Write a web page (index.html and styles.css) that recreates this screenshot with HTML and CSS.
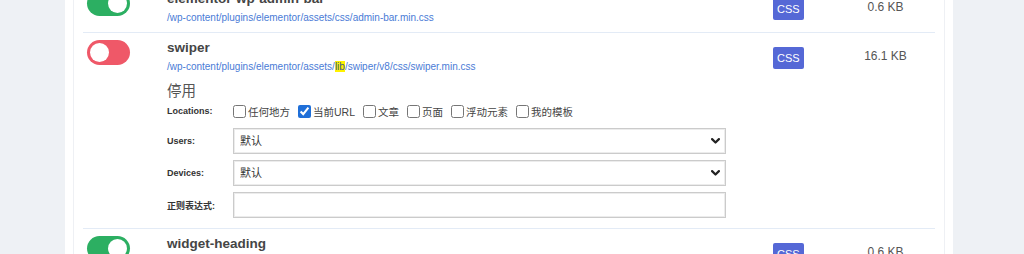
FILE: index.html
```html
<!DOCTYPE html>
<html lang="zh-CN">
<head>
<meta charset="utf-8">
<title>Assets</title>
<link rel="stylesheet" href="styles.css">
</head>
<body>
<div class="page">
  <div class="panel">
    <div class="box">
      <div class="row">
        <div class="c-toggle"><span class="toggle on"></span></div>
        <div class="c-info">
          <div class="name">elementor-wp-admin-bar</div>
          <div class="path">/wp-content/plugins/elementor/assets/css/admin-bar.min.css</div>
        </div>
        <div class="c-type"><span class="badge">CSS</span></div>
        <div class="c-size">0.6 KB</div>
      </div>
      <div class="row row-open">
        <div class="c-toggle"><span class="toggle off"></span></div>
        <div class="c-info">
          <div class="name">swiper</div>
          <div class="path">/wp-content/plugins/elementor/assets/<mark class="hl">lib</mark>/swiper/v8/css/swiper.min.css</div>
          <div class="details">
            <div class="state">停用</div>
            <div class="field-row loc-row">
              <span class="label">Locations:</span>
              <div class="checks">
                <label class="check"><input type="checkbox">任何地方</label>
                <label class="check"><input type="checkbox" checked>当前URL</label>
                <label class="check"><input type="checkbox">文章</label>
                <label class="check"><input type="checkbox">页面</label>
                <label class="check"><input type="checkbox">浮动元素</label>
                <label class="check"><input type="checkbox">我的模板</label>
              </div>
            </div>
            <div class="field-row">
              <span class="label">Users:</span>
              <select class="input select"><option>默认</option></select>
            </div>
            <div class="field-row">
              <span class="label">Devices:</span>
              <select class="input select"><option>默认</option></select>
            </div>
            <div class="field-row">
              <span class="label">正则表达式:</span>
              <input class="input" type="text">
            </div>
          </div>
        </div>
        <div class="c-type"><span class="badge">CSS</span></div>
        <div class="c-size">16.1 KB</div>
      </div>
      <div class="row">
        <div class="c-toggle"><span class="toggle on"></span></div>
        <div class="c-info">
          <div class="name">widget-heading</div>
          <div class="path">/wp-content/plugins/elementor/assets/css/widget-heading.min.css</div>
        </div>
        <div class="c-type"><span class="badge">CSS</span></div>
        <div class="c-size">0.6 KB</div>
      </div>
    </div>
  </div>
</div>
</body>
</html>
```
FILE: styles.css
```css
html, body {
  margin: 0;
  padding: 0;
  background: #eef1f5;
  height: 100%;
  overflow: hidden;
}
body {
  font-family: "Liberation Sans", "Noto Sans CJK SC", sans-serif;
  color: #444;
}
.page {
  padding-left: 65px;
}
.panel {
  width: 872px;
  padding: 0 8px;
  background: #fff;
  margin-top: -16px;
  min-height: 300px;
}
.box {
  border-left: 1px solid #eef0f4;
  border-right: 1px solid #eef0f4;
  padding: 0 9px;
  min-height: 300px;
}
.row {
  display: flex;
  align-items: flex-start;
  border-bottom: 1px solid #e3ebf6;
  padding-bottom: 7px;
}
.row-open {
  padding-bottom: 10px;
}
.c-toggle {
  width: 80px;
  padding-left: 4px;
  padding-top: 7px;
}
.toggle {
  display: block;
  position: relative;
  width: 43px;
  height: 25px;
  border-radius: 13px;
}
.toggle::after {
  content: "";
  position: absolute;
  top: 3px;
  width: 19px;
  height: 19px;
  border-radius: 50%;
  background: #fff;
}
.toggle.on { background: #2caf62; }
.toggle.on::after { right: 3px; }
.toggle.off { background: #ef5868; }
.toggle.off::after { left: 3px; }
.c-info {
  flex: 1;
  padding-top: 5px;
  min-width: 0;
}
.name {
  font-size: 13.5px;
  font-weight: bold;
  line-height: 20px;
  color: #454545;
}
.path {
  margin-top: 2px;
  font-size: 10px;
  line-height: 14px;
  color: #4a7bd6;
  white-space: nowrap;
}
.hl {
  background: #fff200;
  color: #3d5a8a;
  padding: 0;
}
.c-type {
  width: 63px;
  padding-top: 14px;
}
.badge {
  display: inline-block;
  height: 22px;
  line-height: 22px;
  padding: 0 4px;
  background: #5568d6;
  color: #fff;
  font-size: 11px;
  border-radius: 2px;
}
.c-size {
  width: 99px;
  padding-top: 15px;
  line-height: 16px;
  font-size: 12px;
  color: #555;
  text-align: center;
}
.details {
  padding-top: 5px;
}
.state {
  font-size: 14.5px;
  line-height: 21px;
  color: #555;
  font-family: "Noto Sans CJK SC", sans-serif;
}
.field-row {
  display: flex;
  align-items: center;
  margin-bottom: 6px;
}
.field-row:last-child {
  margin-bottom: 0;
}
.loc-row {
  height: 20px;
  margin-top: 1px;
  margin-bottom: 7px;
}
.label {
  width: 66px;
  flex: none;
  font-size: 9px;
  font-weight: bold;
  color: #333;
}
.checks {
  display: flex;
  align-items: center;
  gap: 8px;
}
.check {
  display: flex;
  align-items: center;
  font-size: 10.5px;
  color: #444;
  white-space: nowrap;
}
.check input {
  margin: 0 2px 0 0;
  width: 13px;
  height: 13px;
  accent-color: #1f6fd8;
}
.input {
  box-sizing: border-box;
  width: 493px;
  height: 26px;
  margin: 0;
  padding: 0 6px;
  border: 1px solid #cbcbcb;
  box-shadow: inset 0 0 0 1px #ececec;
  border-radius: 0;
  background: #fff;
  font-family: "Liberation Sans", "Noto Sans CJK SC", sans-serif;
  font-size: 11px;
  color: #333;
  outline: none;
}
.select {
  appearance: none;
  -webkit-appearance: none;
  background-image: url("data:image/svg+xml;utf8,<svg xmlns='http://www.w3.org/2000/svg' width='9' height='6' viewBox='0 0 9 6'><path d='M1.1 1.1 L4.5 4.5 L7.9 1.1' fill='none' stroke='%23222' stroke-width='2.2' stroke-linecap='round' stroke-linejoin='round'/></svg>");
  background-repeat: no-repeat;
  background-position: right 5px center;
  background-size: 9px 6px;
}
```
